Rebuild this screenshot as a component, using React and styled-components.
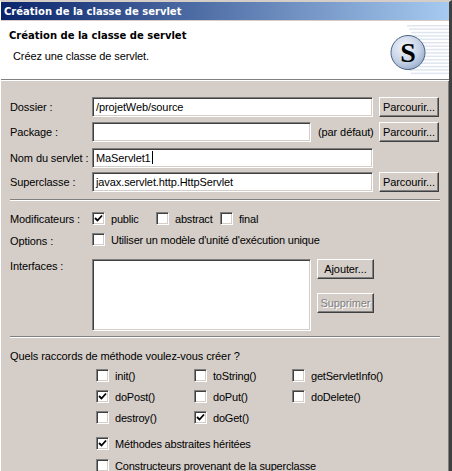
import React from 'react';
import styled, { createGlobalStyle } from 'styled-components';

const GlobalStyle = createGlobalStyle`
  html, body { margin: 0; padding: 0; background: #d5cec8; }
  * { box-sizing: border-box; }
`;

const Win = styled.div`
  width: 452px;
  height: 471px;
  overflow: hidden;
  background: #d5cec8;
  color: #000;
  font-family: "Liberation Sans", Arial, sans-serif;
  font-size: 11px;
  letter-spacing: -0.1px;
  border-top: 2px solid #d5cec8;
  border-left: 1px solid #fff;
  border-right: 3px solid #404040;
  box-shadow: inset -1px 0 0 #808080;
`;

const TitleBar = styled.div`
  height: 18px;
  padding-left: 3px;
  display: flex;
  align-items: center;
  background: linear-gradient(to right, #0a246a, #a6caf0);
  color: #fff;
  font-family: "DejaVu Sans", sans-serif;
  font-weight: 700;
  font-size: 10px;
  letter-spacing: 0;
`;

const Banner = styled.div`
  height: 60px;
  background: #fff;
  border-top: 1px solid #d5cec8;
  border-bottom: 1px solid #808080;
  box-shadow: 0 1px 0 #fff;
  display: flex;
  justify-content: space-between;
`;

const BannerText = styled.div`
  padding: 8px 0 0 8px;
`;

const BannerTitle = styled.div`
  font-family: "DejaVu Sans", sans-serif;
  font-weight: 700;
  font-size: 10px;
  letter-spacing: 0;
  line-height: 14px;
`;

const BannerSub = styled.div`
  margin: 6px 0 0 4px;
  line-height: 14px;
`;

const Form = styled.div`
  padding: 17px 9px 0 9px;
`;

const FieldGrid = styled.div`
  display: grid;
  grid-template-columns: 82px 219px 62px 66px;
  grid-template-rows: 25px 26px 24px 20px;
  align-items: start;
`;

const Label = styled.div`
  line-height: 20px;
`;

const Input = styled.div`
  grid-column: ${({ $span }) => `span ${$span}`};
  height: 20px;
  background: #fff;
  border: 1px solid;
  border-color: #808080 #fff #fff #808080;
  box-shadow: inset 1px 1px 0 #404040, inset -1px -1px 0 #d5cec8;
  padding-left: 3px;
  line-height: 18px;
  white-space: nowrap;
`;

const Caret = styled.span`
  display: inline-block;
  width: 1px;
  height: 13px;
  margin-left: 1px;
  background: #000;
  vertical-align: -2px;
`;

const Suffix = styled.div`
  padding-left: 7px;
  line-height: 20px;
  white-space: nowrap;
`;

const Button = styled.div`
  width: ${({ $w }) => $w}px;
  height: ${({ $h }) => $h}px;
  margin-left: ${({ $ml }) => $ml || 0}px;
  display: flex;
  align-items: center;
  justify-content: center;
  background: #d5cec8;
  border: 1px solid;
  border-color: #fff #404040 #404040 #fff;
  box-shadow: inset -1px -1px 0 #808080;
  color: ${({ $off }) => ($off ? '#808080' : '#000')};
  text-shadow: ${({ $off }) => ($off ? '1px 1px 0 #fff' : 'none')};
`;

const Separator = styled.div`
  height: 2px;
  margin-top: ${({ $mt }) => $mt}px;
  width: 430px;
  background: #808080;
  border-bottom: 1px solid #fff;
`;

const OptionGrid = styled.div`
  margin-top: 11px;
  display: grid;
  grid-template-columns: 82px 1fr;
  grid-template-rows: 21px 26px;
`;

const OptionLabel = styled(Label)`
  line-height: 14px;
  padding-top: ${({ $top }) => $top}px;
`;

const Inline = styled.div`
  display: grid;
  grid-template-columns: 64px 64px auto;
  align-content: start;
`;

const CheckRow = styled.div`
  display: flex;
  align-items: center;
  height: 13px;
  gap: 6px;
  white-space: nowrap;
  letter-spacing: -0.2px;
`;

const Box = styled.span`
  flex: none;
  width: 13px;
  height: 13px;
  background: #fff;
  border: 1px solid;
  border-color: #808080 #fff #fff #808080;
  box-shadow: inset 1px 1px 0 #404040, inset -1px -1px 0 #d5cec8;
  display: flex;
  align-items: center;
  justify-content: center;
`;

const InterfaceGrid = styled.div`
  display: grid;
  grid-template-columns: 82px 219px auto;
`;

const ListBox = styled.div`
  height: 72px;
  background: #fff;
  border: 1px solid;
  border-color: #808080 #fff #fff #808080;
  box-shadow: inset 1px 1px 0 #404040, inset -1px -1px 0 #d5cec8;
`;

const ButtonStack = styled.div`
  display: flex;
  flex-direction: column;
  gap: 14px;
  padding-left: 6px;
`;

const Question = styled.div`
  margin-top: 11px;
  line-height: 14px;
`;

const MethodGrid = styled.div`
  margin: 6px 0 0 86px;
  display: grid;
  grid-template-columns: repeat(3, 98px);
  grid-auto-rows: 21px;
`;

const ExtraList = styled.div`
  margin: 5px 0 0 86px;
  display: flex;
  flex-direction: column;
  gap: 9px;
`;

const Check = ({ on, children }) => (
  <CheckRow>
    <Box>
      {on && (
        <svg width="9" height="9" viewBox="0 0 9 9">
          <path d="M1 4 L3.5 6.5 L8 1.5" fill="none" stroke="#000" strokeWidth="1.8" />
        </svg>
      )}
    </Box>
    <span>{children}</span>
  </CheckRow>
);

const Logo = () => (
  <svg width="72" height="58" viewBox="0 0 72 58">
    <defs>
      <radialGradient id="ball" cx="0.4" cy="0.35" r="0.75">
        <stop offset="0" stopColor="#f2f5fa" />
        <stop offset="0.6" stopColor="#c5d2e6" />
        <stop offset="1" stopColor="#8fa3c4" />
      </radialGradient>
    </defs>
    {Array.from({ length: 15 }).map((_, i) => (
      <rect key={i} x={30 + (i % 3) * 2} y={4 + i * 3.4} width="42" height="1.5" fill="#dfe6f0" />
    ))}
    <circle cx="31" cy="31.5" r="17" fill="url(#ball)" stroke="#4d6386" strokeWidth="1" />
    <text x="31" y="40.5" textAnchor="middle" fontFamily="Liberation Serif, serif" fontWeight="700" fontSize="28" fill="#000">S</text>
  </svg>
);

export default function App() {
  return (
    <Win>
      <GlobalStyle />
      <TitleBar>Création de la classe de servlet</TitleBar>
      <Banner>
        <BannerText>
          <BannerTitle>Création de la classe de servlet</BannerTitle>
          <BannerSub>Créez une classe de servlet.</BannerSub>
        </BannerText>
        <Logo />
      </Banner>
      <Form>
        <FieldGrid>
          <Label>Dossier :</Label>
          <Input $span={2}>/projetWeb/source</Input>
          <Button $w={60} $h={20} $ml={6}>Parcourir...</Button>

          <Label>Package :</Label>
          <Input $span={1} />
          <Suffix>(par défaut)</Suffix>
          <Button $w={60} $h={20} $ml={6}>Parcourir...</Button>

          <Label>Nom du servlet :</Label>
          <Input $span={2}>MaServlet1<Caret /></Input>
          <span />

          <Label>Superclasse :</Label>
          <Input $span={2}>javax.servlet.http.HttpServlet</Input>
          <Button $w={60} $h={20} $ml={6}>Parcourir...</Button>
        </FieldGrid>

        <Separator $mt={7} />

        <OptionGrid>
          <OptionLabel $top={0}>Modificateurs :</OptionLabel>
          <Inline>
            <Check on>public</Check>
            <Check>abstract</Check>
            <Check>final</Check>
          </Inline>
          <OptionLabel $top={1}>Options :</OptionLabel>
          <Check>Utiliser un modèle d'unité d'exécution unique</Check>
        </OptionGrid>

        <InterfaceGrid>
          <OptionLabel $top={0}>Interfaces :</OptionLabel>
          <ListBox />
          <ButtonStack>
            <Button $w={57} $h={20}>Ajouter...</Button>
            <Button $w={57} $h={20} $off>Supprimer</Button>
          </ButtonStack>
        </InterfaceGrid>

        <Separator $mt={5} />

        <Question>Quels raccords de méthode voulez-vous créer ?</Question>

        <MethodGrid>
          <Check>init()</Check>
          <Check>toString()</Check>
          <Check>getServletInfo()</Check>
          <Check on>doPost()</Check>
          <Check>doPut()</Check>
          <Check>doDelete()</Check>
          <Check>destroy()</Check>
          <Check on>doGet()</Check>
        </MethodGrid>

        <ExtraList>
          <Check on>Méthodes abstraites héritées</Check>
          <Check>Constructeurs provenant de la superclasse</Check>
        </ExtraList>
      </Form>
    </Win>
  );
}
